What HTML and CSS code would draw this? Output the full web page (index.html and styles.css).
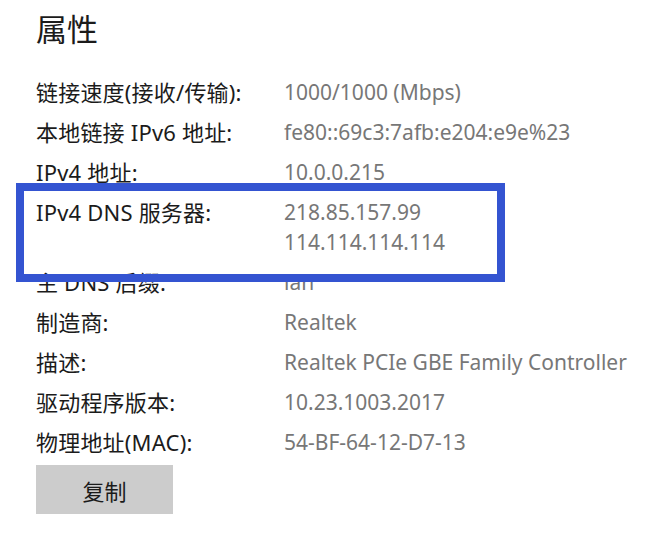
FILE: index.html
```html
<!DOCTYPE html>
<html lang="zh-CN">
<head>
<meta charset="utf-8">
<title>属性</title>
<link rel="stylesheet" href="styles.css">
</head>
<body>
<main class="panel">
  <h1 class="title">属性</h1>
  <dl class="props">
    <dt>链接速度(接收/传输):</dt><dd>1000/1000 (Mbps)</dd>
    <dt>本地链接 IPv6 地址:</dt><dd>fe80::69c3:7afb:e204:e9e%23</dd>
    <dt>IPv4 地址:</dt><dd>10.0.0.215</dd>
    <dt>IPv4 DNS 服务器:</dt><dd>218.85.157.99<br>114.114.114.114</dd>
    <dt>主 DNS 后缀:</dt><dd>lan</dd>
    <dt>制造商:</dt><dd>Realtek</dd>
    <dt>描述:</dt><dd>Realtek PCIe GBE Family Controller</dd>
    <dt>驱动程序版本:</dt><dd>10.23.1003.2017</dd>
    <dt>物理地址(MAC):</dt><dd>54-BF-64-12-D7-13</dd>
  </dl>
  <button class="copy" type="button">复制</button>
  <div class="highlight"></div>
</main>
</body>
</html>
```

FILE: styles.css
```css
html, body {
  margin: 0;
  padding: 0;
  background: #ffffff;
}

body {
  font-family: "Segoe UI", "Noto Sans", "Noto Sans CJK SC", sans-serif;
  color: #1b1b1b;
}

.panel {
  position: relative;
  padding: 0 0 0 36px;
}

.title {
  margin: 0;
  padding-top: 10px;
  height: 40px;
  font-size: 31px;
  line-height: 38px;
  font-weight: 400;
  color: #1b1b1b;
}

.props {
  display: grid;
  grid-template-columns: 248px auto;
  row-gap: 10px;
  margin: 27px 0 0 0;
  font-size: 21px;
  line-height: 30px;
}

.props dt {
  margin: 0;
  color: #1b1b1b;
  font-size: 22px;
  letter-spacing: 0.2px;
}

.props dd {
  margin: 0;
  color: #777777;
}

.copy {
  display: block;
  margin-top: 8px;
  width: 137px;
  height: 49px;
  border: none;
  background: #cccccc;
  font-family: inherit;
  font-size: 22px;
  color: #1b1b1b;
  padding: 0;
}

.highlight {
  position: absolute;
  left: 16px;
  top: 183px;
  width: 489px;
  height: 99px;
  box-sizing: border-box;
  border: 8px solid #3454d1;
  pointer-events: none;
}
```
